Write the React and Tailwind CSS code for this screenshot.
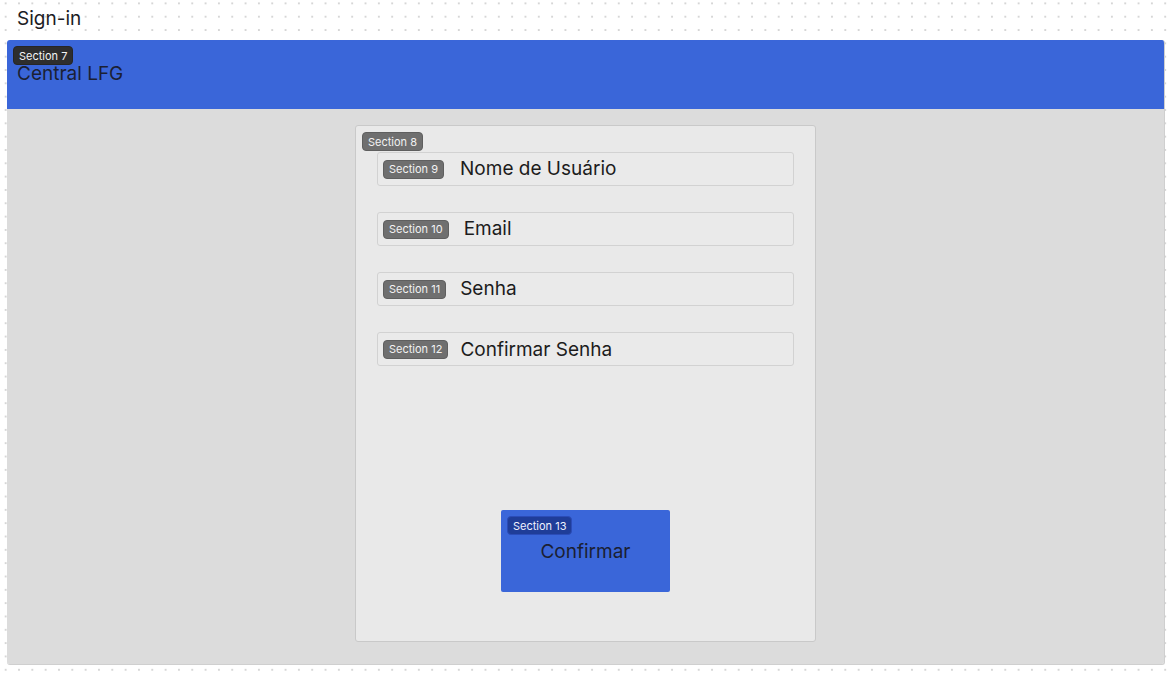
import React from "react";

const font = { fontFamily: "Inter, 'Noto Sans', sans-serif" };

function Badge({ children, tone = "gray" }) {
  const tones = {
    gray: "bg-[#6f6f6f] text-[#f2f2f2] border-[#5f5f5f]",
    dark: "bg-[#2e2e2e] text-[#f4f4f4] border-[#262626]",
    blue: "bg-[#1f3d99] text-[#eef1ff] border-[#2b4cb8]",
  };
  return (
    <span
      className={
        "flex h-[19px] items-center rounded-[4px] border px-[5px] pt-[1px] text-[11px] leading-none whitespace-nowrap " +
        tones[tone]
      }
    >
      {children}
    </span>
  );
}

const rows = [
  { badge: "Section 9", label: "Nome de Usuário", gap: "ml-[16px]", pad: "pt-0" },
  { badge: "Section 10", label: "Email", gap: "ml-[15px]", pad: "pt-0" },
  { badge: "Section 11", label: "Senha", gap: "ml-[14px]", pad: "pt-0" },
  { badge: "Section 12", label: "Confirmar Senha", gap: "ml-[12px]", pad: "pt-[2px]" },
];

export default function App() {
  return (
    <div
      style={font}
      className="relative h-[676px] w-full overflow-hidden bg-white bg-[radial-gradient(circle,#d6d6d6_0.8px,transparent_1.1px)] bg-[size:13.333px_13.333px] bg-[position:-1px_-3.3px] text-[#1c1c24]"
    >
      <div className="flex h-[40px] items-start pl-[17px] pt-[5px] text-[19px] leading-[28px]">
        Sign-in
      </div>
      <div className="ml-[7px] flex h-[625px] w-[1158px] flex-col overflow-hidden rounded-[3px] border-r border-b border-[#cfcfcf]">
        <div className="relative h-[69px] shrink-0 bg-[#3a66d9] pl-[10px] pt-[20px]">
          <div className="absolute left-[6px] top-[6px] flex">
            <Badge tone="dark">Section 7</Badge>
          </div>
          <div className="text-[19px] leading-[28px] text-[#1b1f33]">Central LFG</div>
        </div>
        <div className="flex flex-1 justify-center bg-[#dcdcdc] pt-[16px]">
          <div className="relative flex h-[517px] w-[461px] flex-col rounded-[3px] border border-[#c9c9c9] bg-[#e9e9e9] px-[21px] pt-[26px]">
            <div className="absolute left-[6px] top-[6px] flex">
              <Badge>Section 8</Badge>
            </div>
            <div className="flex flex-col gap-[26px]">
              {rows.map((r) => (
                <div
                  key={r.badge}
                  className="flex h-[34px] items-center rounded-[3px] border border-[#d2d2d2] bg-[#eaeaea] pl-[5px]"
                >
                  <Badge>{r.badge}</Badge>
                  <span className={"text-[19px] leading-[28px] text-[#1c1c1c] " + r.gap + " " + r.pad}>
                    {r.label}
                  </span>
                </div>
              ))}
            </div>
            <div className="mt-[144px] flex justify-center">
              <div className="relative flex h-[82px] w-[169px] items-start justify-center rounded-[2px] bg-[#3a66d9] pt-[28px]">
                <div className="absolute left-[6px] top-[6px] flex">
                  <Badge tone="blue">Section 13</Badge>
                </div>
                <span className="text-[19px] leading-[28px] text-[#1b1f33]">Confirmar</span>
              </div>
            </div>
          </div>
        </div>
      </div>
    </div>
  );
}
